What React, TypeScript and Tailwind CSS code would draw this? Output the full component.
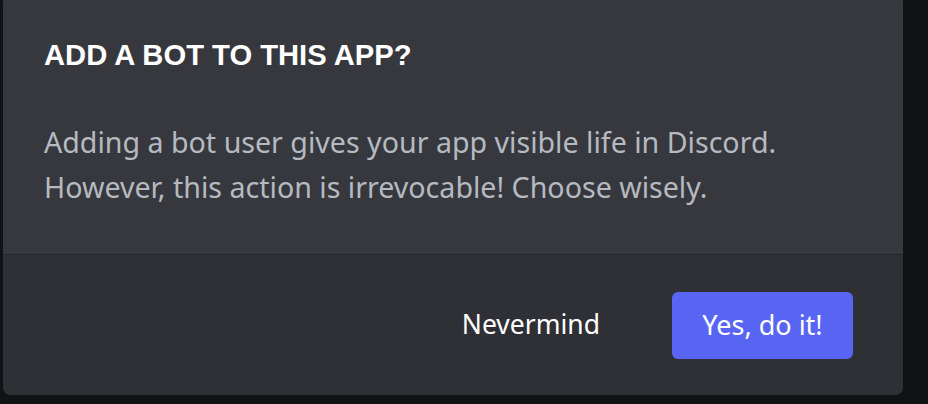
export default function App() {
  return (
    <div className="h-[404px] w-[928px] overflow-hidden bg-[#111214]">
      <div className="-mt-[6px] ml-[3px] w-[900px] overflow-hidden rounded-[8px] bg-[#37383e]">
        {/* header + body */}
        <div className="px-[41px] pt-[45px] pb-[45px]">
          <h1 className="font-['Liberation_Sans',Arial,sans-serif] text-[29.2px] leading-[33px] font-bold text-white">
            ADD A BOT TO THIS APP?
          </h1>
          <p className="mt-[47px] font-['Noto_Sans',sans-serif] text-[28.6px] leading-[45px] text-[#b5bac1]">
            Adding a bot user gives your app visible life in Discord.
            <br />
            However, this action is irrevocable! Choose wisely.
          </p>
        </div>

        {/* footer */}
        <div className="flex h-[141px] items-center justify-end gap-[72px] border-t border-[#26272b] bg-[#2f3035] pr-[50px]">
          <button
            type="button"
            className="font-['Noto_Sans',sans-serif] text-[26.5px] text-white"
          >
            Nevermind
          </button>
          <button
            type="button"
            className="flex h-[67px] w-[181px] items-center justify-center rounded-[6px] bg-[#5865f2] font-['Noto_Sans',sans-serif] text-[27px] text-white"
          >
            Yes, do it!
          </button>
        </div>
      </div>
    </div>
  );
}
